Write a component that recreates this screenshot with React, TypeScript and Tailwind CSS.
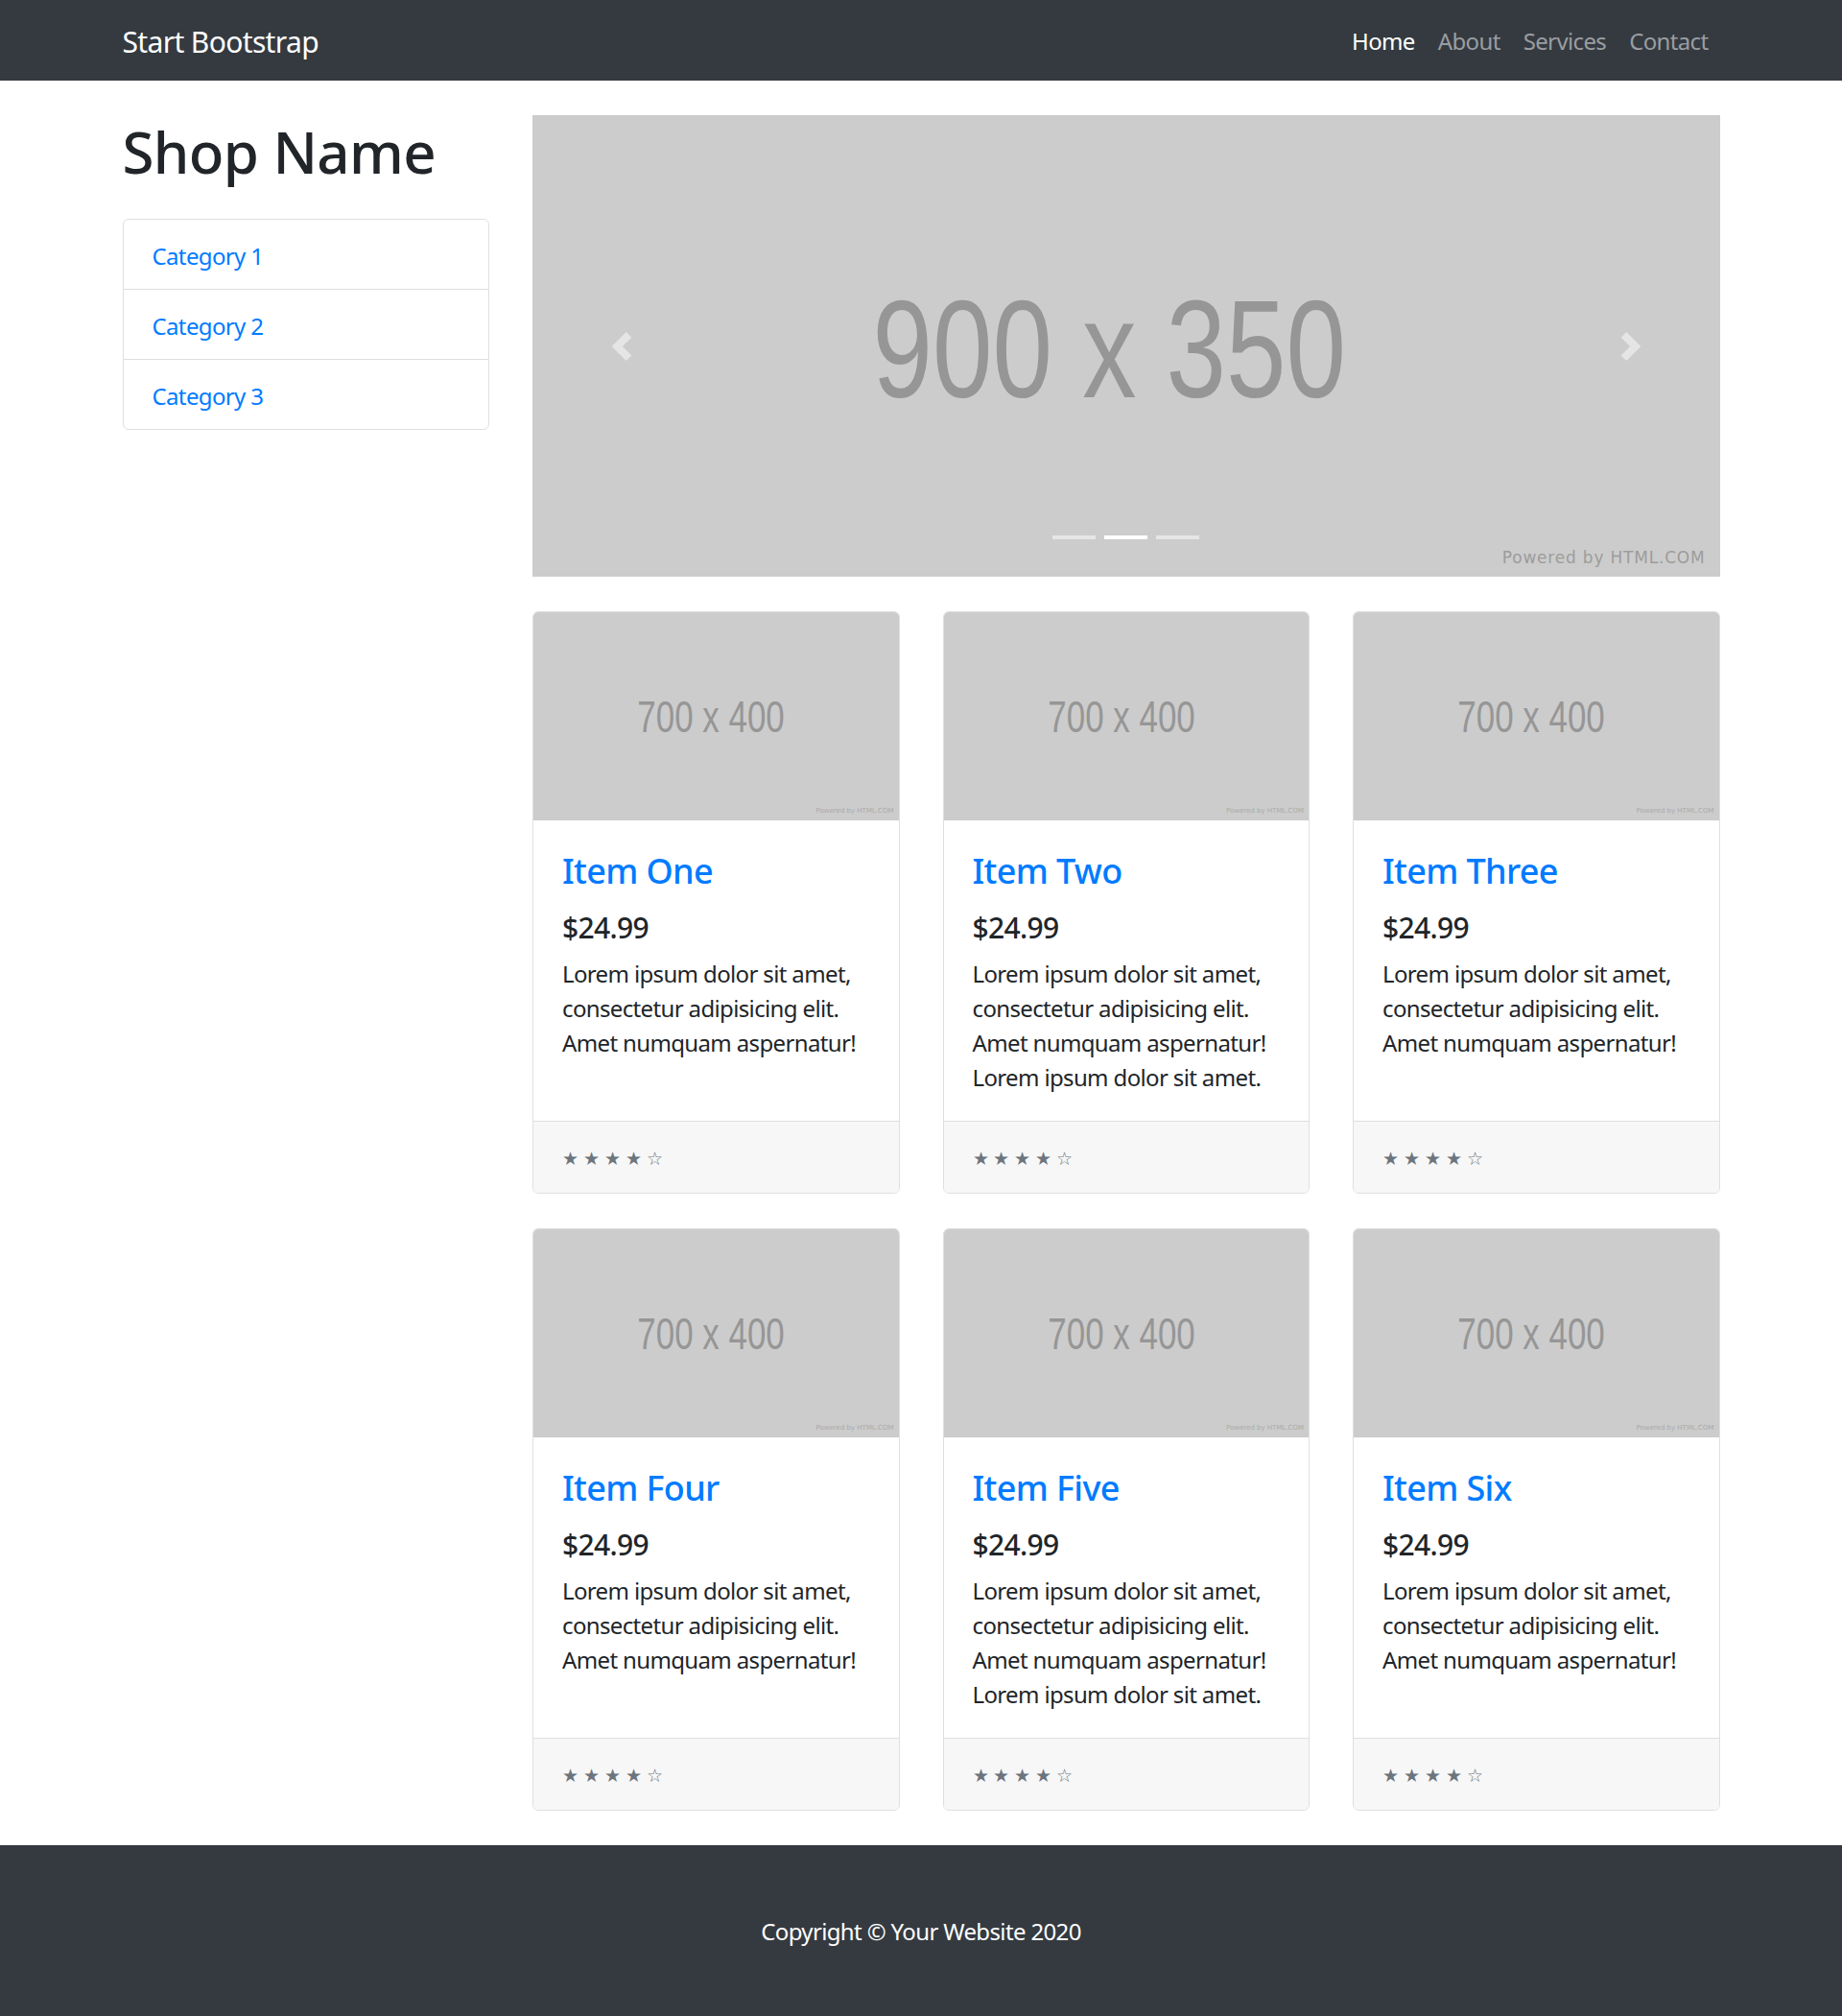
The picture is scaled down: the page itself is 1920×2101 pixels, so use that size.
const items = [
  { name: "Item One", text: "Lorem ipsum dolor sit amet, consectetur adipisicing elit. Amet numquam aspernatur!" },
  { name: "Item Two", text: "Lorem ipsum dolor sit amet, consectetur adipisicing elit. Amet numquam aspernatur! Lorem ipsum dolor sit amet." },
  { name: "Item Three", text: "Lorem ipsum dolor sit amet, consectetur adipisicing elit. Amet numquam aspernatur!" },
  { name: "Item Four", text: "Lorem ipsum dolor sit amet, consectetur adipisicing elit. Amet numquam aspernatur!" },
  { name: "Item Five", text: "Lorem ipsum dolor sit amet, consectetur adipisicing elit. Amet numquam aspernatur! Lorem ipsum dolor sit amet." },
  { name: "Item Six", text: "Lorem ipsum dolor sit amet, consectetur adipisicing elit. Amet numquam aspernatur!" },
];

function ProductCard({ name, text }: { name: string; text: string }) {
  return (
    <div className="flex flex-col overflow-hidden rounded-[6px] border border-[#dfdfdf] bg-white">
      <div className="relative flex h-[217px] items-center justify-center bg-[#cccccc] pr-[10px]">
        <span className="scale-x-[0.76] font-['Liberation_Sans',Arial,sans-serif] text-[46px] leading-none tracking-normal text-[#969696]">
          700 x 400
        </span>
        <span className="absolute bottom-[6px] right-[5px] font-['DejaVu_Sans',sans-serif] text-[7px] leading-none tracking-normal text-[#aaaaaa]">
          Powered by HTML.COM
        </span>
      </div>
      <div className="flex-1 px-[30px] pb-[27px] pt-[31px]">
        <h4 className="mb-[20px] text-[36px] font-medium leading-[43px] text-[#007bff]">
          <a href="#">{name}</a>
        </h4>
        <h5 className="mb-[12px] text-[30px] font-medium leading-[36px] text-[#212529]">$24.99</h5>
        <p className="text-[24px] leading-[36px] text-[#212529]">{text}</p>
      </div>
      <div className="border-t border-[#dfdfdf] bg-[#f7f7f7] px-[30px] py-[18px] text-[24px] leading-[36px]">
        <small className="text-[19.2px] tracking-normal text-[#6c757d]">&#9733; &#9733; &#9733; &#9733; &#9734;</small>
      </div>
    </div>
  );
}

export default function App() {
  return (
    <div className="min-h-screen bg-white font-['Noto_Sans','Open_Sans',sans-serif] tracking-[-0.04em] text-[#212529]">
      <nav className="h-[84px] bg-[#343a40]">
        <div className="mx-auto flex h-full w-[1710px] items-center justify-between px-[22.5px] pt-[2px]">
          <a href="#" className="text-[30px] leading-[45px] text-white">
            Start Bootstrap
          </a>
          <ul className="flex text-[24px] leading-[36px]">
            <li>
              <a href="#" className="block px-[12px] text-white">Home</a>
            </li>
            <li>
              <a href="#" className="block px-[12px] text-[#9a9da0]">About</a>
            </li>
            <li>
              <a href="#" className="block px-[12px] text-[#9a9da0]">Services</a>
            </li>
            <li>
              <a href="#" className="block px-[12px] text-[#9a9da0]">Contact</a>
            </li>
          </ul>
        </div>
      </nav>

      <div className="mx-auto w-[1710px] px-[22.5px]">
        <div className="flex gap-[45px]">
          <aside className="w-[382.5px] shrink-0">
            <h1 className="my-[36px] pt-[2px] text-[60px] font-medium leading-[72px]">Shop Name</h1>
            <div className="-mt-[2px] rounded-[6px] border border-[#dfdfdf] text-[24px] leading-[36px] text-[#007bff]">
              <a href="#" className="block border-b border-[#dfdfdf] px-[30px] pb-[16px] pt-[20px]">Category 1</a>
              <a href="#" className="block border-b border-[#dfdfdf] px-[30px] pb-[16px] pt-[20px]">Category 2</a>
              <a href="#" className="block px-[30px] pb-[16px] pt-[20px]">Category 3</a>
            </div>
          </aside>

          <main className="min-w-0 flex-1 pt-[36px]">
            <div className="relative mb-[36px] flex h-[481px] items-center justify-center bg-[#cccccc] pr-[34px] pt-[8px]">
              <span className="scale-x-[0.78] font-['Liberation_Sans',Arial,sans-serif] text-[144px] leading-none tracking-normal text-[#969696]">
                900 x 350
              </span>
              <button className="absolute left-0 top-0 flex h-full w-[15%] items-center justify-center opacity-50">
                <svg width="30" height="30" viewBox="0 0 8 8" fill="#fff">
                  <path d="M5.25 0l-4 4 4 4 1.5-1.5L4.25 4l2.5-2.5L5.25 0z" />
                </svg>
              </button>
              <button className="absolute right-0 top-0 flex h-full w-[15%] items-center justify-center opacity-50">
                <svg width="30" height="30" viewBox="0 0 8 8" fill="#fff">
                  <path d="M2.75 0l-1.5 1.5L3.75 4l-2.5 2.5L2.75 8l4-4-4-4z" />
                </svg>
              </button>
              <div className="absolute bottom-[39px] left-0 right-0 flex justify-center gap-[9px]">
                <span className="h-[4.5px] w-[45px] bg-white opacity-50" />
                <span className="h-[4.5px] w-[45px] bg-white" />
                <span className="h-[4.5px] w-[45px] bg-white opacity-50" />
              </div>
              <span className="absolute bottom-[7px] right-[15px] font-['DejaVu_Sans',sans-serif] text-[17px] tracking-[0.8px] text-[#9c9c9c]">
                Powered by HTML.COM
              </span>
            </div>

            <div className="grid grid-cols-3 gap-x-[45px] gap-y-[36px] pb-[36px]">
              {items.map((item) => (
                <ProductCard key={item.name} name={item.name} text={item.text} />
              ))}
            </div>
          </main>
        </div>
      </div>

      <footer className="bg-[#343a40] py-[72px]">
        <p className="text-center text-[24px] leading-[36px] text-white">Copyright &copy; Your Website 2020</p>
      </footer>
    </div>
  );
}
